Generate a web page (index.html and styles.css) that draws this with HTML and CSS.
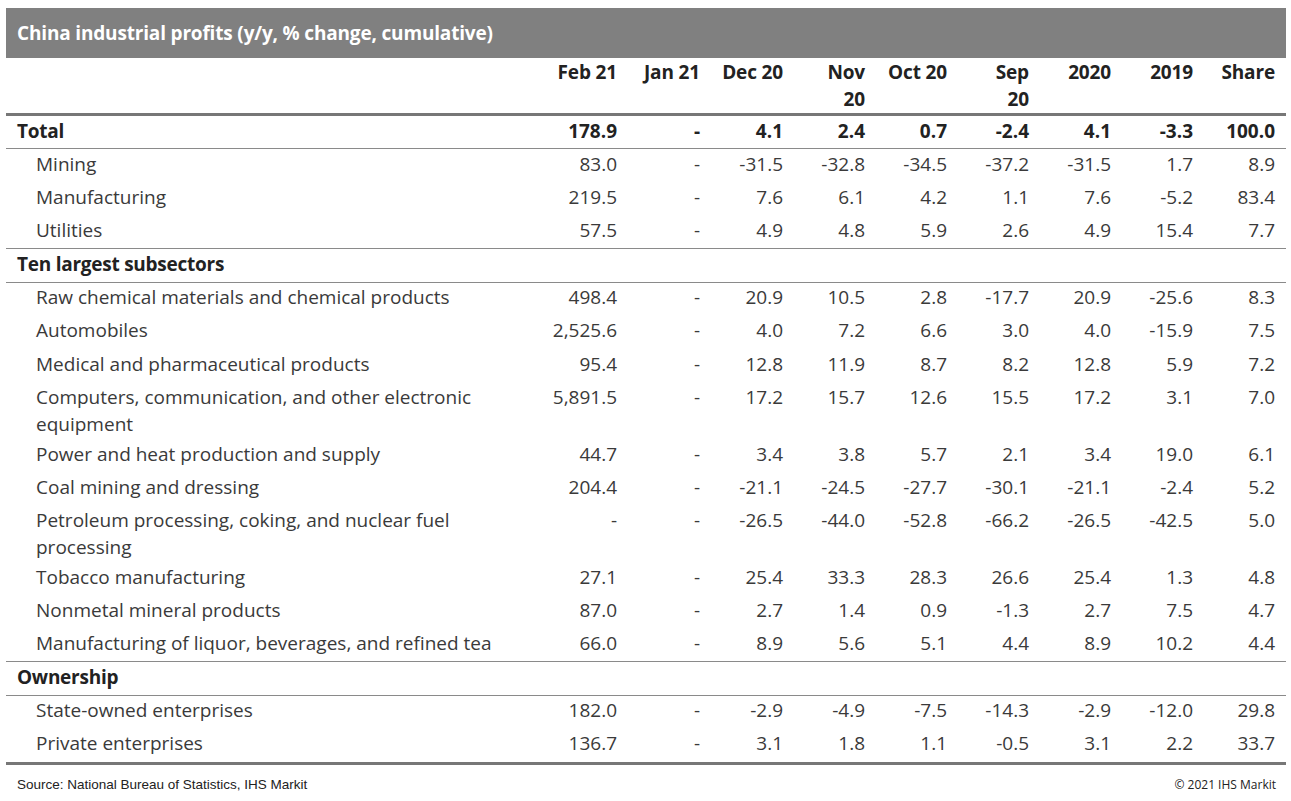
FILE: index.html
```html
<!DOCTYPE html>
<html lang="en">
<head>
<meta charset="utf-8">
<title>China industrial profits</title>
<link rel="stylesheet" href="styles.css">
</head>
<body>
<div class="wrap">
  <div class="title">China industrial profits (y/y, % change, cumulative)</div>
  <table class="data">
    <colgroup>
      <col class="c-label">
      <col class="c-wide"><col class="c-wide"><col class="c-wide">
      <col class="c-num"><col class="c-num"><col class="c-num"><col class="c-num"><col class="c-num"><col class="c-num">
    </colgroup>
    <thead>
      <tr>
        <th class="lbl"></th>
        <th>Feb 21</th><th>Jan 21</th><th>Dec 20</th><th>Nov<br>20</th><th>Oct 20</th><th>Sep<br>20</th><th>2020</th><th>2019</th><th>Share</th>
      </tr>
    </thead>
    <tbody>
      <tr class="bold rule"><td class="lbl">Total</td><td>178.9</td><td>-</td><td>4.1</td><td>2.4</td><td>0.7</td><td>-2.4</td><td>4.1</td><td>-3.3</td><td>100.0</td></tr>
      <tr><td class="lbl sub">Mining</td><td>83.0</td><td>-</td><td>-31.5</td><td>-32.8</td><td>-34.5</td><td>-37.2</td><td>-31.5</td><td>1.7</td><td>8.9</td></tr>
      <tr><td class="lbl sub">Manufacturing</td><td>219.5</td><td>-</td><td>7.6</td><td>6.1</td><td>4.2</td><td>1.1</td><td>7.6</td><td>-5.2</td><td>83.4</td></tr>
      <tr class="rule"><td class="lbl sub">Utilities</td><td>57.5</td><td>-</td><td>4.9</td><td>4.8</td><td>5.9</td><td>2.6</td><td>4.9</td><td>15.4</td><td>7.7</td></tr>
      <tr class="bold rule"><td class="lbl" colspan="10">Ten largest subsectors</td></tr>
      <tr><td class="lbl sub">Raw chemical materials and chemical products</td><td>498.4</td><td>-</td><td>20.9</td><td>10.5</td><td>2.8</td><td>-17.7</td><td>20.9</td><td>-25.6</td><td>8.3</td></tr>
      <tr><td class="lbl sub">Automobiles</td><td>2,525.6</td><td>-</td><td>4.0</td><td>7.2</td><td>6.6</td><td>3.0</td><td>4.0</td><td>-15.9</td><td>7.5</td></tr>
      <tr><td class="lbl sub">Medical and pharmaceutical products</td><td>95.4</td><td>-</td><td>12.8</td><td>11.9</td><td>8.7</td><td>8.2</td><td>12.8</td><td>5.9</td><td>7.2</td></tr>
      <tr class="two"><td class="lbl sub">Computers, communication, and other electronic equipment</td><td>5,891.5</td><td>-</td><td>17.2</td><td>15.7</td><td>12.6</td><td>15.5</td><td>17.2</td><td>3.1</td><td>7.0</td></tr>
      <tr><td class="lbl sub">Power and heat production and supply</td><td>44.7</td><td>-</td><td>3.4</td><td>3.8</td><td>5.7</td><td>2.1</td><td>3.4</td><td>19.0</td><td>6.1</td></tr>
      <tr><td class="lbl sub">Coal mining and dressing</td><td>204.4</td><td>-</td><td>-21.1</td><td>-24.5</td><td>-27.7</td><td>-30.1</td><td>-21.1</td><td>-2.4</td><td>5.2</td></tr>
      <tr class="two"><td class="lbl sub">Petroleum processing, coking, and nuclear fuel processing</td><td>-</td><td>-</td><td>-26.5</td><td>-44.0</td><td>-52.8</td><td>-66.2</td><td>-26.5</td><td>-42.5</td><td>5.0</td></tr>
      <tr><td class="lbl sub">Tobacco manufacturing</td><td>27.1</td><td>-</td><td>25.4</td><td>33.3</td><td>28.3</td><td>26.6</td><td>25.4</td><td>1.3</td><td>4.8</td></tr>
      <tr><td class="lbl sub">Nonmetal mineral products</td><td>87.0</td><td>-</td><td>2.7</td><td>1.4</td><td>0.9</td><td>-1.3</td><td>2.7</td><td>7.5</td><td>4.7</td></tr>
      <tr class="rule"><td class="lbl sub">Manufacturing of liquor, beverages, and refined tea</td><td>66.0</td><td>-</td><td>8.9</td><td>5.6</td><td>5.1</td><td>4.4</td><td>8.9</td><td>10.2</td><td>4.4</td></tr>
      <tr class="bold rule"><td class="lbl" colspan="10">Ownership</td></tr>
      <tr><td class="lbl sub">State-owned enterprises</td><td>182.0</td><td>-</td><td>-2.9</td><td>-4.9</td><td>-7.5</td><td>-14.3</td><td>-2.9</td><td>-12.0</td><td>29.8</td></tr>
      <tr class="end"><td class="lbl sub">Private enterprises</td><td>136.7</td><td>-</td><td>3.1</td><td>1.8</td><td>1.1</td><td>-0.5</td><td>3.1</td><td>2.2</td><td>33.7</td></tr>
    </tbody>
  </table>
  <div class="foot">
    <span class="source">Source: National Bureau of Statistics, IHS Markit</span>
    <span class="copy">© 2021 IHS Markit</span>
  </div>
</div>
</body>
</html>
```

FILE: styles.css
```css
html, body {
  margin: 0;
  padding: 0;
  background: #ffffff;
}

.wrap {
  width: 1280px;
  padding: 8px 0 0 6px;
  font-family: "Open Sans", "Noto Sans", sans-serif;
  color: #333333;
}

.title {
  height: 50px;
  box-sizing: border-box;
  background: #808080;
  color: #ffffff;
  font-weight: 700;
  font-size: 19px;
  letter-spacing: -0.17px;
  line-height: 50px;
  padding-left: 11px;
}

.data {
  width: 1280px;
  table-layout: fixed;
  border-collapse: collapse;
  font-size: 19px;
}

.c-label { width: 539px; }
.c-wide { width: 83px; }
.c-num { width: 82px; }

.data th {
  font-weight: 700;
  color: #222222;
  text-align: right;
  vertical-align: top;
  line-height: 27px;
  padding: 1px 11px 0 0;
  letter-spacing: -0.15px;
  border-bottom: 3px solid #777777;
}

.data td {
  text-align: right;
  vertical-align: top;
  line-height: 25px;
  padding: 2.5px 11px 5.83px 0;
  color: #3a3a3a;
}

.data tr.two td {
  line-height: 27px;
  padding-top: 1.5px;
  padding-bottom: 1px;
}

.data td.lbl,
.data th.lbl {
  text-align: left;
  padding-left: 11px;
  padding-right: 40px;
}

.data td.sub {
  padding-left: 30px;
}

.data tr.bold td {
  font-weight: 700;
  color: #222222;
}

.data tr.bold td.lbl {
  letter-spacing: -0.25px;
}

.data tr.rule td {
  padding-bottom: 4.83px;
  border-bottom: 1px solid #8a8a8a;
}

.data tr.end td {
  border-bottom: 3px solid #777777;
}

.foot {
  display: flex;
  justify-content: space-between;
  align-items: baseline;
  padding: 11px 10px 0 11px;
}

.source {
  font-family: "Liberation Sans", Arial, sans-serif;
  font-size: 13.5px;
  color: #222222;
}

.copy {
  font-family: "Open Sans", "Noto Sans", sans-serif;
  font-size: 12px;
  color: #222222;
}
```
